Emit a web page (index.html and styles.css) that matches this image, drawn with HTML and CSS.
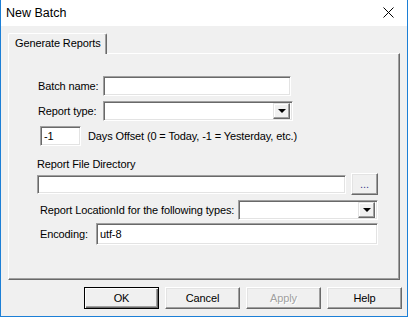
FILE: index.html
```html
<!DOCTYPE html>
<html lang="en">
<head>
    <meta charset="UTF-8">
    <title>New Batch</title>
    <link rel="stylesheet" href="styles.css">
</head>
<body>
    <div class="window">
        <div class="titlebar">
            <span class="title">New Batch</span>
            <svg class="close" width="11" height="11" viewBox="0 0 11 11">
                <path d="M0.5 0.5 L10.5 10.5 M10.5 0.5 L0.5 10.5" stroke="#000" stroke-width="1" fill="none"/>
            </svg>
        </div>

        <div class="tabs">
            <div class="tab">Generate Reports</div>
        </div>

        <div class="panel">
            <div class="row row-name">
                <label class="lbl lbl-name">Batch name:</label>
                <div class="field w-name"></div>
            </div>
            <div class="row row-type">
                <label class="lbl lbl-name">Report type:</label>
                <div class="field combo w-type"><span class="drop"><span class="arrow"></span></span></div>
            </div>
            <div class="row row-offset">
                <div class="field w-offset"><span class="val">-1</span></div>
                <span class="hint">Days Offset (0 = Today, -1 = Yesterday, etc.)</span>
            </div>
            <div class="row row-dirlabel">
                <label class="lbl">Report File Directory</label>
            </div>
            <div class="row row-dir">
                <div class="field w-dir"></div>
                <div class="btn small">...</div>
            </div>
            <div class="row row-loc">
                <label class="lbl lbl-loc">Report LocationId for the following types:</label>
                <div class="field combo w-loc"><span class="drop"><span class="arrow"></span></span></div>
            </div>
            <div class="row row-enc">
                <label class="lbl lbl-enc">Encoding:</label>
                <div class="field w-enc"><span class="val">utf-8</span></div>
            </div>
        </div>

        <div class="buttons">
            <div class="btn default">OK</div>
            <div class="btn">Cancel</div>
            <div class="btn disabled">Apply</div>
            <div class="btn">Help</div>
        </div>
    </div>
</body>
</html>
```

FILE: styles.css
```css
* {
    box-sizing: border-box;
}
body {
    margin: 0;
    font-family: "Liberation Sans", Arial, sans-serif;
    font-size: 11px;
    letter-spacing: -0.12px;
    color: #000;
    background: #fff;
}
.window {
    width: 408px;
    height: 317px;
    border: 1px solid #1c7fd6;
    border-top: 0;
    background: #f0f0f0;
    display: flex;
    flex-direction: column;
}
.titlebar {
    height: 26px;
    background: #fff;
    display: flex;
    align-items: center;
    justify-content: space-between;
    padding: 0 13px 1px 5px;
}
.title {
    font-size: 12.5px;
    letter-spacing: 0;
}
.close {
    display: block;
}
.tabs {
    margin-top: 7px;
    padding-left: 7px;
    display: flex;
}
.tab {
    width: 99px;
    height: 21px;
    margin-bottom: -1px;
    position: relative;
    z-index: 1;
    background: #f0f0f0;
    border-top: 1px solid #fff;
    border-left: 1px solid #fff;
    border-right: 1px solid #696969;
    box-shadow: inset -1px 0 0 #a0a0a0;
    border-radius: 2px 2px 0 0;
    padding: 3px 0 0 6px;
}
.panel {
    margin-left: 7px;
    width: 392px;
    height: 227px;
    border: 1px solid;
    border-color: #fff #696969 #696969 #fff;
    box-shadow: inset -1px -1px 0 #a0a0a0;
    padding: 22px 0 0 0;
}
.row {
    display: flex;
    align-items: center;
}
.lbl {
    white-space: nowrap;
}
.field {
    height: 20px;
    background: #fff;
    border: 1px solid;
    border-color: #a0a0a0 #fff #fff #a0a0a0;
    box-shadow: inset 1px 1px 0 #696969, inset -1px -1px 0 #e3e3e3;
    display: flex;
    align-items: center;
    padding-left: 3px;
}
.combo {
    justify-content: flex-end;
    padding: 2px;
}
.drop {
    width: 17px;
    height: 16px;
    background: #f0f0f0;
    border: 1px solid;
    border-color: #e3e3e3 #696969 #696969 #e3e3e3;
    box-shadow: inset -1px -1px 0 #a0a0a0, inset 1px 1px 0 #fff;
    display: flex;
    align-items: center;
    justify-content: center;
}
.arrow {
    width: 0;
    height: 0;
    border-left: 4px solid transparent;
    border-right: 4px solid transparent;
    border-top: 4px solid #000;
    margin-left: 1px;
}
.row-name {
    padding-left: 29px;
}
.lbl-name {
    width: 65px;
}
.w-name {
    width: 188px;
}
.row-type {
    padding-left: 29px;
    margin-top: 5px;
}
.w-type {
    width: 190px;
}
.row-offset {
    padding-left: 31px;
    margin-top: 5px;
}
.w-offset {
    width: 41px;
}
.hint {
    margin-left: 7px;
}
.row-dirlabel {
    padding-left: 28px;
    margin-top: 12px;
}
.row-dir {
    padding-left: 28px;
    margin-top: 3px;
    gap: 5px;
}
.w-dir {
    width: 309px;
    height: 19px;
}
.btn {
    width: 75px;
    height: 22px;
    background: #f0f0f0;
    border: 1px solid;
    border-color: #fff #696969 #696969 #fff;
    box-shadow: inset -1px -1px 0 #a0a0a0, inset 1px 1px 0 #e3e3e3;
    display: flex;
    align-items: center;
    justify-content: center;
    padding-bottom: 1px;
}
.btn.small {
    width: 27px;
    color: #3c3c8c;
}
.row-loc {
    padding-left: 31px;
    margin-top: 5px;
}
.lbl-loc {
    width: 198px;
}
.w-loc {
    width: 140px;
}
.row-enc {
    padding-left: 31px;
    margin-top: 3px;
}
.lbl-enc {
    width: 56px;
}
.w-enc {
    width: 282px;
    height: 22px;
}
.buttons {
    margin-top: 7px;
    display: flex;
    justify-content: flex-end;
    gap: 6px;
    padding-right: 5px;
}
.btn.default {
    border-color: #000;
    box-shadow: inset 1px 1px 0 #fff, inset -1px -1px 0 #696969, inset -2px -2px 0 #a0a0a0;
}
.btn.disabled {
    color: #a0a0a0;
    text-shadow: 1px 1px 0 #fff;
}
```
